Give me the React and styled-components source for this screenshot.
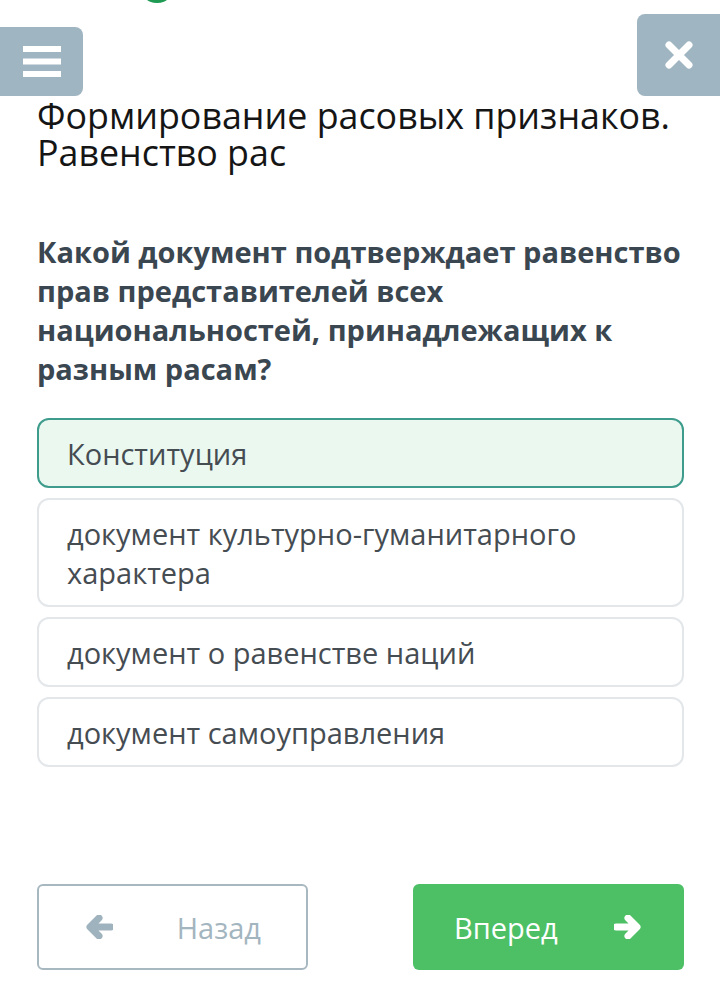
import styled, { createGlobalStyle } from "styled-components";

const Global = createGlobalStyle`
  body {
    margin: 0;
    background: #fff;
    font-family: "Open Sans", "Noto Sans", sans-serif;
  }
`;

const Page = styled.div`
  position: relative;
  width: 720px;
  height: 995px;
  overflow: hidden;
  background: #fff;
`;

const TopBar = styled.div`
  display: flex;
  justify-content: space-between;
  align-items: flex-start;
  height: 97px;
`;

const Dot = styled.div`
  position: absolute;
  left: 139px;
  top: -33px;
  width: 36px;
  height: 36px;
  border-radius: 50%;
  background: #1f9a52;
`;

const SideButton = styled.div`
  display: flex;
  align-items: center;
  justify-content: center;
  background: #9fb5c1;
  margin-top: ${(p) => p.$top}px;
  width: ${(p) => p.$w}px;
  height: ${(p) => 96 - p.$top}px;
  border-radius: ${(p) => (p.$left ? "0 8px 8px 0" : "8px 0 0 8px")};
`;

const Content = styled.div`
  padding: 0 36px 0 37px;
`;

const Title = styled.h1`
  margin: 0;
  font-weight: 400;
  font-size: 35.8px;
  line-height: 37px;
  color: #151515;
`;

const Question = styled.p`
  margin: 61px 0 0;
  font-weight: 700;
  font-size: 29px;
  line-height: 39px;
  color: #3a4650;
`;

const Options = styled.div`
  display: flex;
  flex-direction: column;
  gap: 10px;
  margin-top: 30px;
`;

const Option = styled.div`
  box-sizing: border-box;
  min-height: 70px;
  padding: 13.5px 20px 13.5px 28px;
  border: 2px solid ${(p) => (p.$selected ? "#3e9c8c" : "#e3e7ea")};
  background: ${(p) => (p.$selected ? "#eaf8f0" : "#fff")};
  border-radius: 12px;
  font-size: 29px;
  line-height: 39px;
  color: #454c52;
`;

const Footer = styled.div`
  position: absolute;
  left: 37px;
  right: 36px;
  top: 884px;
  display: flex;
  justify-content: space-between;
`;

const NavButton = styled.div`
  box-sizing: border-box;
  width: 271px;
  height: 86px;
  display: flex;
  align-items: center;
  justify-content: space-between;
  border-radius: 6px;
  font-size: 29px;
  border: ${(p) => (p.$primary ? "none" : "2px solid #a7b8c1")};
  background: ${(p) => (p.$primary ? "#4dc066" : "#fff")};
  color: ${(p) => (p.$primary ? "#fff" : "#a3b5bf")};
  padding: ${(p) => (p.$primary ? "0 42px 0 41px" : "0 45px 0 46px")};
`;

const Burger = () => (
  <svg width="38" height="31" viewBox="0 0 38 31">
    <rect x="0" y="0" width="38" height="6" fill="#fff" />
    <rect x="0" y="12.5" width="38" height="6" fill="#fff" />
    <rect x="0" y="25" width="38" height="6" fill="#fff" />
  </svg>
);

const Cross = () => (
  <svg width="30" height="30" viewBox="0 0 30 30">
    <path d="M5 5 L25 25 M25 5 L5 25" stroke="#fff" strokeWidth="7" strokeLinecap="round" />
  </svg>
);

const Arrow = ({ dir, color }) => (
  <svg width="28" height="24" viewBox="0 0 28 24" style={{ transform: dir === "left" ? "scaleX(-1)" : "none" }}>
    <path d="M2 12 H22 M14 3 L23 12 L14 21" stroke={color} strokeWidth="7" fill="none" strokeLinecap="round" strokeLinejoin="round" />
  </svg>
);

const options = [
  "Конституция",
  "документ культурно-гуманитарного характера",
  "документ о равенстве наций",
  "документ самоуправления",
];

export default function App() {
  return (
    <Page>
      <Global />
      <Dot />
      <TopBar>
        <SideButton $left $top={27} $w={83}>
          <Burger />
        </SideButton>
        <SideButton $top={14} $w={83}>
          <Cross />
        </SideButton>
      </TopBar>
      <Content>
        <Title>
          Формирование расовых признаков.
          <br />
          Равенство рас
        </Title>
        <Question>
          Какой документ подтверждает равенство прав представителей всех национальностей, принадлежащих к разным расам?
        </Question>
        <Options>
          {options.map((o, i) => (
            <Option key={o} $selected={i === 0}>
              {o}
            </Option>
          ))}
        </Options>
      </Content>
      <Footer>
        <NavButton>
          <Arrow dir="left" color="#9fb3bf" />
          <span>Назад</span>
        </NavButton>
        <NavButton $primary>
          <span>Вперед</span>
          <Arrow color="#fff" />
        </NavButton>
      </Footer>
    </Page>
  );
}
